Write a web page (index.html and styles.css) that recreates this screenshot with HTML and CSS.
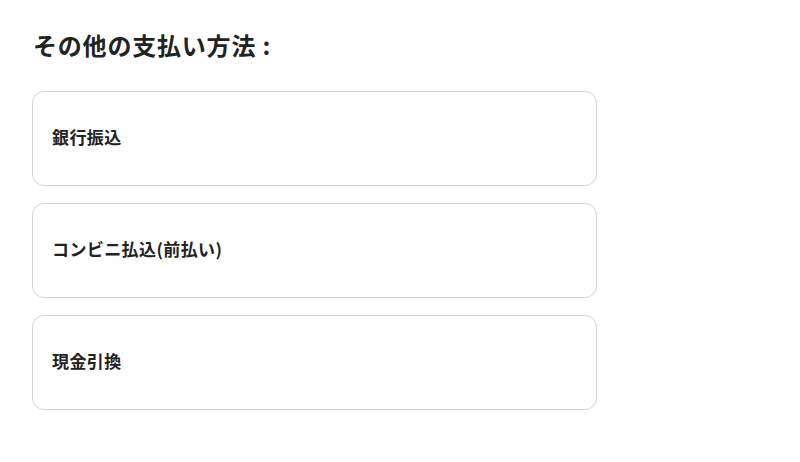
FILE: index.html
```html
<!DOCTYPE html>
<html lang="ja">
<head>
<meta charset="utf-8">
<link rel="stylesheet" href="styles.css">
</head>
<body>
<div class="page">
  <h2 class="title">その他の支払い方法 :</h2>
  <div class="list">
    <div class="card">銀行振込</div>
    <div class="card">コンビニ払込(前払い)</div>
    <div class="card">現金引換</div>
  </div>
</div>
</body>
</html>
```
FILE: styles.css
```css
html, body {
  margin: 0;
  padding: 0;
  background: #fff;
}
body {
  font-family: "Noto Sans CJK JP", "Noto Sans", sans-serif;
  color: #222;
}
.page {
  padding: 27px 0 0 32px;
  width: 565px;
}
.title {
  margin: 0 0 28px 1px;
  font-size: 24px;
  line-height: 36px;
  font-weight: 700;
  letter-spacing: 0.8px;
}
.list {
  display: flex;
  flex-direction: column;
  gap: 17px;
}
.card {
  box-sizing: border-box;
  height: 95px;
  border: 1px solid #d4d4d4;
  border-radius: 12px;
  padding: 0 19px 4px;
  display: flex;
  align-items: center;
  font-size: 17px;
  letter-spacing: 0.4px;
  font-weight: 700;
}
```
